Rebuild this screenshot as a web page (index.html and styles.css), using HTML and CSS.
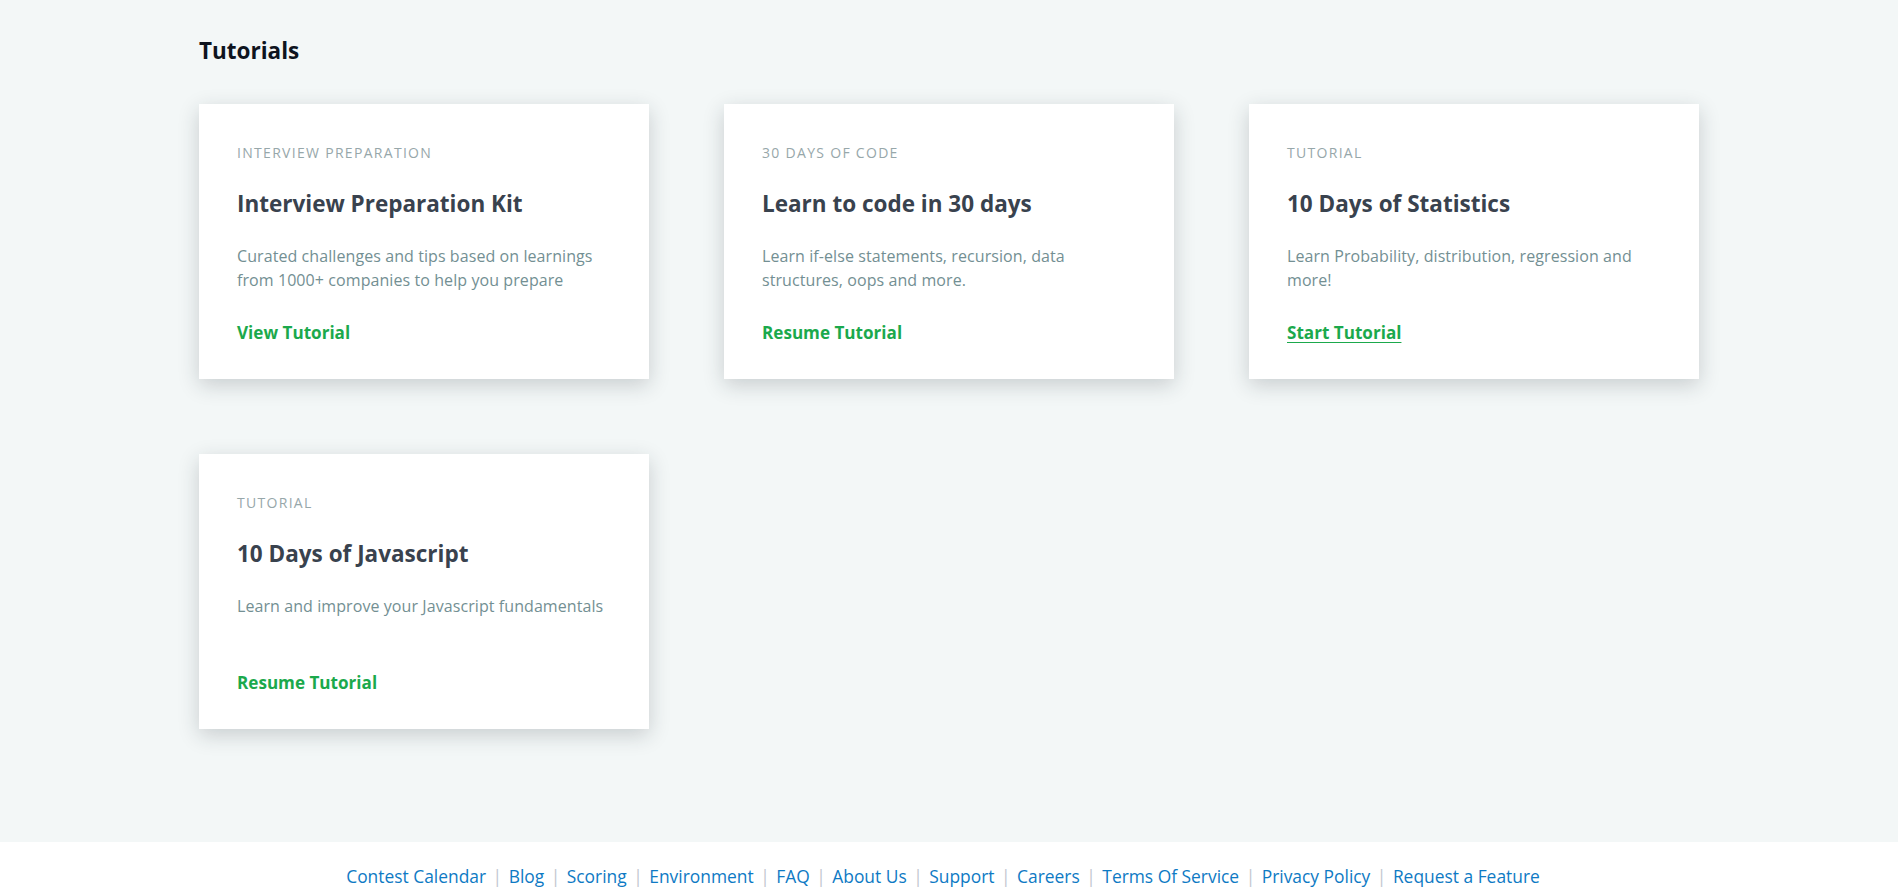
FILE: index.html
```html
<!DOCTYPE html>
<html lang="en">
<head>
<meta charset="utf-8">
<title>Tutorials</title>
<link rel="stylesheet" href="styles.css">
</head>
<body>
<main class="page">
  <h1 class="page-title">Tutorials</h1>
  <div class="card-grid">
    <article class="card">
      <div class="card-label">Interview Preparation</div>
      <h2 class="card-title">Interview Preparation Kit</h2>
      <p class="card-desc">Curated challenges and tips based on learnings from 1000+ companies to help you prepare</p>
      <a class="card-link" href="#">View Tutorial</a>
    </article>
    <article class="card">
      <div class="card-label">30 Days of Code</div>
      <h2 class="card-title">Learn to code in 30 days</h2>
      <p class="card-desc">Learn if-else statements, recursion, data structures, oops and more.</p>
      <a class="card-link" href="#">Resume Tutorial</a>
    </article>
    <article class="card">
      <div class="card-label">Tutorial</div>
      <h2 class="card-title">10 Days of Statistics</h2>
      <p class="card-desc">Learn Probability, distribution, regression and more!</p>
      <a class="card-link card-link-hover" href="#">Start Tutorial</a>
    </article>
    <article class="card">
      <div class="card-label">Tutorial</div>
      <h2 class="card-title">10 Days of Javascript</h2>
      <p class="card-desc">Learn and improve your Javascript fundamentals</p>
      <a class="card-link" href="#">Resume Tutorial</a>
    </article>
  </div>
</main>
<footer class="footer">
  <nav class="footer-links"><a href="#">Contest Calendar</a><span class="sep">|</span><a href="#">Blog</a><span class="sep">|</span><a href="#">Scoring</a><span class="sep">|</span><a href="#">Environment</a><span class="sep">|</span><a href="#">FAQ</a><span class="sep">|</span><a href="#">About Us</a><span class="sep">|</span><a href="#">Support</a><span class="sep">|</span><a href="#">Careers</a><span class="sep">|</span><a href="#">Terms Of Service</a><span class="sep">|</span><a href="#">Privacy Policy</a><span class="sep">|</span><a href="#">Request a Feature</a></nav>
</footer>
</body>
</html>
```
FILE: styles.css
```css
* { box-sizing: border-box; }
html, body {
  margin: 0;
  padding: 0;
}
body {
  background: #f3f7f7;
  font-family: "Open Sans", "Noto Sans", "Liberation Sans", sans-serif;
  color: #39424e;
}
.page {
  width: 1500px;
  margin: 0 auto;
  padding: 36px 0 113px;
}
.page-title {
  margin: 0 0 38px;
  font-size: 22.5px;
  line-height: 30px;
  font-weight: 700;
  color: #0e141e;
}
.card-grid {
  display: grid;
  grid-template-columns: repeat(3, 450px);
  column-gap: 75px;
  row-gap: 75px;
}
.card {
  background: #fff;
  height: 275px;
  padding: 39px 38px 34px;
  box-shadow: 0 6px 20px rgba(30, 40, 50, 0.2);
  display: flex;
  flex-direction: column;
  align-items: flex-start;
}
.card-label {
  font-size: 14px;
  line-height: 20px;
  letter-spacing: 1.3px;
  text-transform: uppercase;
  color: #97a7aa;
}
.card-title {
  margin: 26px 0 0;
  font-size: 22.5px;
  line-height: 30px;
  font-weight: 700;
  color: #39424e;
}
.card-desc {
  margin: 25px 0 0;
  font-size: 16px;
  letter-spacing: 0.08px;
  line-height: 24px;
  min-height: 48px;
  color: #738f93;
}
.card-link {
  margin-top: 29px;
  font-size: 17.1px;
  line-height: 24px;
  font-weight: 700;
  color: #1ba94c;
  text-decoration: none;
}
.card-link-hover {
  text-decoration: underline;
  text-underline-offset: 3px;
  text-decoration-thickness: 1px;
}
.footer {
  background: #fff;
  padding: 22px 12px 20px 0;
}
.footer-links {
  text-align: center;
  font-size: 17.4px;
  line-height: 24px;
  white-space: nowrap;
}
.footer-links a {
  color: #0e7ac4;
  text-decoration: none;
}
.footer-links .sep {
  color: #c2c7d0;
  margin: 0 6.5px;
}
```
